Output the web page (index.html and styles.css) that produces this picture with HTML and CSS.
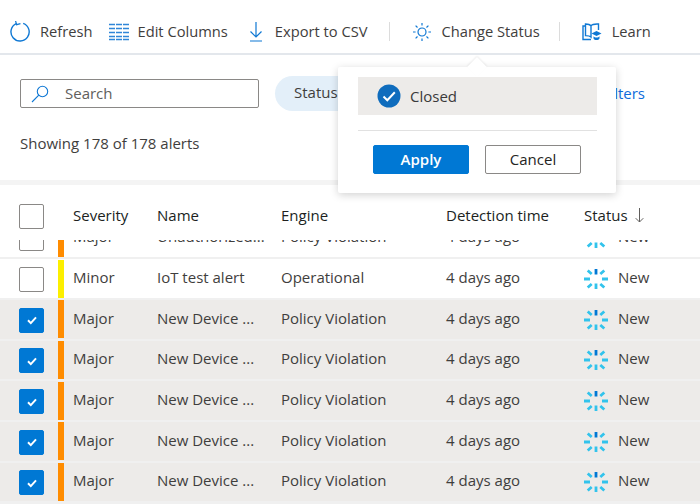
FILE: index.html
```html
<!DOCTYPE html>
<html lang="en">
<head>
<meta charset="utf-8">
<title>Alerts</title>
<link rel="stylesheet" href="styles.css">
</head>
<body>
<svg class="defs" width="0" height="0" aria-hidden="true">
  <defs>
    <g id="spin" fill="none" stroke-width="2.800" stroke-linecap="butt">
      <path d="M12 0v5.500" stroke="#0078d4"/>
      <path d="M20.300 1.500l-4 3.500M24 10h-6M20.300 18.500l-4-3.500M12 20v-5.500M3.700 18.500l4-3.500M0 10h6M3.700 1.500l4 3.500" stroke="#32c3ec"/>
    </g>
    <g id="tick"><path d="M4 8.300l2.800 2.800L12 5.400" fill="none" stroke="#fff" stroke-width="2"/></g>
  </defs>
</svg>
<main class="page">
  <header class="toolbar">
    <button class="tool tool-refresh">
      <svg class="ico" width="20" height="22" viewBox="0 0 20 22"><path d="M6.200 2.600A9.100 9.100 0 1 0 13.200 2.300" fill="none" stroke="#0f78d4" stroke-width="1.400"/><path d="M6.400 -0.200v4h4" fill="none" stroke="#0f78d4" stroke-width="1.200" transform="rotate(-15 6 3)"/></svg>
      <span>Refresh</span>
    </button>
    <button class="tool tool-edit">
      <svg class="ico" width="20" height="18" viewBox="0 0 20 18"><path d="M0 1.500h20M0 5.500h20M0 9.500h20M0 13.500h20M0 16.500h20" stroke="#2f86d8" stroke-width="1.600" fill="none"/><path d="M6.500 0v18M13.500 0v18" stroke="#fff" stroke-width="1"/></svg>
      <span>Edit Columns</span>
    </button>
    <button class="tool tool-export">
      <svg class="ico" width="14" height="20" viewBox="0 0 14 20"><path d="M7 0v15M1.500 9.500L7 15l5.500-5.500M1 19h12" fill="none" stroke="#0f78d4" stroke-width="1.200"/></svg>
      <span>Export to CSV</span>
    </button>
    <i class="sep sep-a"></i>
    <button class="tool tool-status">
      <svg class="ico" width="18" height="18" viewBox="0 0 18 18"><circle cx="9" cy="9" r="4" fill="none" stroke="#0f78d4" stroke-width="1.200"/><path d="M9 0v2.600M9 15.400V18M0 9h2.600M15.400 9H18M2.600 2.600l1.900 1.900M13.500 13.500l1.900 1.900M2.600 15.400l1.900-1.900M13.500 4.500l1.900-1.900" stroke="#0f78d4" stroke-width="1.200"/></svg>
      <span>Change Status</span>
    </button>
    <i class="sep sep-b"></i>
    <button class="tool tool-learn">
      <svg class="ico" width="20" height="18" viewBox="0 0 20 18"><path d="M3.500 3H1v13.500h8" fill="none" stroke="#0f78d4" stroke-width="1.400"/><path d="M3.500 1c2.500 0 4.500.5 5.500 1.800V14c-1-1-3-1.400-5.500-1.400zM9 2.800C10 1.500 12 1 15 1h1.500v6" fill="none" stroke="#0f78d4" stroke-width="1.400"/><path d="M9.500 10.500l5-2.500 5 2.500-5 2.500z" fill="#0f78d4"/><path d="M11.500 13.200c1 1.800 5 1.800 6 0v2.400c-1 2-5 2-6 0z" fill="#0f78d4"/></svg>
      <span>Learn</span>
    </button>
  </header>

  <section class="filters">
    <div class="filter-row">
      <label class="search">
        <svg width="18" height="18" viewBox="0 0 18 18"><circle cx="11.500" cy="6.500" r="5.200" fill="none" stroke="#0f78d4" stroke-width="1.100"/><path d="M7.800 10.200L1 17" stroke="#0f78d4" stroke-width="1.100"/></svg>
        <span>Search</span>
      </label>
      <span class="pill">Status</span>
      <a class="link">Filters</a>
    </div>
    <p class="count">Showing 178 of 178 alerts</p>
  </section>

  <section class="table">
    <div class="row head">
      <span class="check"></span><span class="bar none"></span>
      <span>Severity</span><span>Name</span><span>Engine</span><span>Detection time</span>
      <span class="sort">Status <svg width="9" height="15" viewBox="0 0 9 15"><path d="M4.500 0v14M.7 10.200l3.800 3.800 3.800-3.800" fill="none" stroke="#605e5c" stroke-width="1"/></svg></span>
    </div>
    <div class="rows">
      <div class="row scrolled">
        <span class="check"></span><span class="bar major"></span>
        <span>Major</span><span>Unauthorized...</span><span>Policy Violation</span><span>4 days ago</span>
        <span class="st"><svg class="spin" width="24" height="20" viewBox="0 0 24 20"><use href="#spin"/></svg>New</span>
      </div>
      <div class="row">
        <span class="check"></span><span class="bar minor"></span>
        <span>Minor</span><span>IoT test alert</span><span>Operational</span><span>4 days ago</span>
        <span class="st"><svg class="spin" width="24" height="20" viewBox="0 0 24 20"><use href="#spin"/></svg>New</span>
      </div>
      <div class="row sel">
        <span class="check on"><svg width="16" height="16" viewBox="0 0 16 16"><use href="#tick"/></svg></span><span class="bar major"></span>
        <span>Major</span><span>New Device ...</span><span>Policy Violation</span><span>4 days ago</span>
        <span class="st"><svg class="spin" width="24" height="20" viewBox="0 0 24 20"><use href="#spin"/></svg>New</span>
      </div>
      <div class="row sel">
        <span class="check on"><svg width="16" height="16" viewBox="0 0 16 16"><use href="#tick"/></svg></span><span class="bar major"></span>
        <span>Major</span><span>New Device ...</span><span>Policy Violation</span><span>4 days ago</span>
        <span class="st"><svg class="spin" width="24" height="20" viewBox="0 0 24 20"><use href="#spin"/></svg>New</span>
      </div>
      <div class="row sel">
        <span class="check on"><svg width="16" height="16" viewBox="0 0 16 16"><use href="#tick"/></svg></span><span class="bar major"></span>
        <span>Major</span><span>New Device ...</span><span>Policy Violation</span><span>4 days ago</span>
        <span class="st"><svg class="spin" width="24" height="20" viewBox="0 0 24 20"><use href="#spin"/></svg>New</span>
      </div>
      <div class="row sel">
        <span class="check on"><svg width="16" height="16" viewBox="0 0 16 16"><use href="#tick"/></svg></span><span class="bar major"></span>
        <span>Major</span><span>New Device ...</span><span>Policy Violation</span><span>4 days ago</span>
        <span class="st"><svg class="spin" width="24" height="20" viewBox="0 0 24 20"><use href="#spin"/></svg>New</span>
      </div>
      <div class="row sel">
        <span class="check on"><svg width="16" height="16" viewBox="0 0 16 16"><use href="#tick"/></svg></span><span class="bar major"></span>
        <span>Major</span><span>New Device ...</span><span>Policy Violation</span><span>4 days ago</span>
        <span class="st"><svg class="spin" width="24" height="20" viewBox="0 0 24 20"><use href="#spin"/></svg>New</span>
      </div>
    </div>
  </section>

  <aside class="popover">
    <i class="beak"></i>
    <div class="option">
      <svg width="24" height="24" viewBox="0 0 24 24"><circle cx="12" cy="12" r="11.500" fill="#0f6cbd"/><path d="M6.500 12.500l3.800 3.800 7.500-8" fill="none" stroke="#fff" stroke-width="2"/></svg>
      <span>Closed</span>
    </div>
    <hr class="rule">
    <div class="actions">
      <button class="btn primary">Apply</button>
      <button class="btn">Cancel</button>
    </div>
  </aside>
</main>
</body>
</html>
```
FILE: styles.css
```css
* { box-sizing: border-box; }
html, body { margin: 0; padding: 0; }
body {
  width: 700px;
  height: 504px;
  overflow: hidden;
  background: #fff;
  font-family: "Open Sans", "Noto Sans", sans-serif;
  font-size: 15px;
  color: #3f3e3d;
}
.defs { position: absolute; }
.page { position: relative; height: 504px; overflow: hidden; }

.toolbar {
  height: 55px;
  padding: 10px 0 0 10px;
  display: flex;
  align-items: center;
  border-bottom: 2px solid #e3e7ec;
  font-size: 14.700px;
}
.tool {
  display: flex;
  align-items: center;
  padding: 0;
  border: 0;
  background: none;
  font: inherit;
  color: inherit;
  white-space: nowrap;
}
.tool span { padding-bottom: 2px; }
.tool .ico { flex: none; }
.tool-refresh { gap: 10px; }
.tool-edit { gap: 9px; margin-left: 16px; }
.tool-export { gap: 12px; margin-left: 21px; }
.tool-status { gap: 11px; margin-left: 23px; }
.tool-learn { gap: 10px; margin-left: 22px; }
.sep { width: 1px; height: 19px; background: #dcdcdc; margin-left: 21px; }
.sep-b { margin-left: 19px; }

.filters {
  height: 130px;
  padding: 24px 20px 0;
  border-bottom: 5px solid #f4f4f4;
}
.filter-row { display: flex; align-items: center; height: 29px; }
.search {
  width: 239px;
  height: 29px;
  display: flex;
  align-items: center;
  gap: 16px;
  padding-left: 10px;
  border: 1px solid #8a8886;
  border-radius: 2px;
  color: #605e5c;
}
.search span { padding-bottom: 2px; }
.pill {
  flex: none;
  width: 130px;
  height: 35px;
  margin-left: 16px;
  padding: 0 0 3px 19px;
  display: flex;
  align-items: center;
  border-radius: 18px;
  background: #e3eff9;
}
.link { margin-left: auto; padding: 0 35px 1px 0; color: #0f6cdc; }
.count { margin: 25px 0 0; line-height: 20px; }

.row {
  display: grid;
  grid-template-columns: 25px 14px 6px 9px 84px 124px 165px 138px 1fr;
  padding-left: 19px;
  align-items: center;
  height: 38.700px;
  margin-bottom: 2px;
}
.row > :nth-child(1) { grid-column: 1; }
.row > :nth-child(2) { grid-column: 3; }
.row > :nth-child(3) { grid-column: 5; }
.row > :nth-child(4) { grid-column: 6; white-space: nowrap; }
.row > :nth-child(5) { grid-column: 7; }
.row > :nth-child(6) { grid-column: 8; }
.row > :nth-child(7) { grid-column: 9; }
.head {
  height: 55px;
  margin: 0;
  padding-top: 8px;
  color: #201f1e;
  font-weight: 500;
}
.head > span:nth-child(n+3) { padding-bottom: 3px; }
.head .none { background: none; height: 1px; }
.sort { display: flex; align-items: center; gap: 7px; }
.rows { height: 264px; overflow: hidden; background: #f0f0f0; }
.rows .row { background: #fff; }
.rows .sel { background: #edebe9; }
.rows .row > span:nth-child(n+3) { padding-bottom: 3px; }
.rows .check { margin-top: 2px; }
.scrolled { margin-top: -21.500px; }
.check {
  width: 25px;
  height: 25px;
  border: 1px solid #8a8886;
  border-radius: 2px;
  background: #fff;
  display: flex;
  align-items: center;
  justify-content: center;
}
.check.on { background: #0078d4; border-color: #0078d4; }
.bar { width: 6px; height: 38px; }
.major { background: #ff8c00; }
.minor { background: #fcef00; }
.rows .st { display: flex; align-items: center; gap: 10px; }
.spin { flex: none; margin-top: 4px; }

.popover {
  position: absolute;
  left: 338px;
  top: 67px;
  width: 278px;
  height: 126px;
  padding: 10px 19px 0 20px;
  background: #fff;
  border-radius: 2px;
  box-shadow: 0 2px 9px rgba(0, 0, 0, .18);
}
.beak {
  position: absolute;
  left: 132px;
  top: -7px;
  width: 14px;
  height: 14px;
  background: #fff;
  transform: rotate(45deg);
  box-shadow: -1px -1px 2px rgba(0, 0, 0, .07);
}
.option {
  position: relative;
  height: 38px;
  display: flex;
  align-items: center;
  gap: 9px;
  padding-left: 19px;
  background: #edebe9;
  color: #3a3a3a;
}
.rule { height: 1px; margin: 15px 0 14px; border: 0; background: #e1e1e1; }
.actions { display: flex; gap: 16px; padding-left: 15px; }
.btn {
  width: 96px;
  height: 29px;
  padding: 0 0 2px;
  border: 1px solid #8a8886;
  border-radius: 2px;
  background: #fff;
  font: inherit;
  font-weight: 500;
  color: #252423;
}
.btn.primary { background: #0078d4; border-color: #0078d4; color: #fff; font-weight: 600; }
```
